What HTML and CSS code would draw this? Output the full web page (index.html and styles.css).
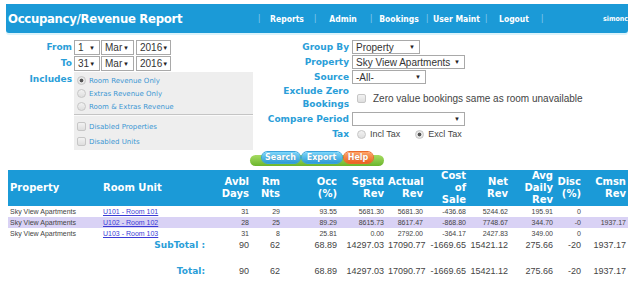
FILE: index.html
```html
<!DOCTYPE html>
<html lang="en">
<head>
  <meta charset="UTF-8" />
  <title>Occupancy/Revenue Report</title>
  <link rel="stylesheet" href="styles.css">
</head>
<body>

  <!-- TOP BAR -->
  <div class="topbar">
    <h1 class="title">Occupancy/Revenue Report</h1>
    <nav class="nav">
      <span class="sep">|</span><a href="#">Reports</a>
      <span class="sep">|</span><a href="#">Admin</a>
      <span class="sep">|</span><a href="#">Bookings</a>
      <span class="sep">|</span><a href="#" class="wide">User Maint</a>
      <span class="sep">|</span><a href="#">Logout</a>
      <span class="sep">|</span>
    </nav>
    <span class="user">simonc</span>
  </div>

  <!-- FILTERS -->
  <form class="filters">
    <div class="filters-left">
      <label class="lbl">From</label>
      <div class="ctrl">
        <span class="sel day">1</span><span class="sel month">Mar</span><span class="sel year">2016</span>
      </div>
      <label class="lbl">To</label>
      <div class="ctrl">
        <span class="sel day">31</span><span class="sel month">Mar</span><span class="sel year">2016</span>
      </div>
      <label class="lbl incl">Includes</label>
      <div class="incl-box">
        <div class="opt"><span class="radio on"></span>Room Revenue Only</div>
        <div class="opt"><span class="radio"></span>Extras Revenue Only</div>
        <div class="opt"><span class="radio"></span>Room &amp; Extras Revenue</div>
        <hr class="divider">
        <div class="opt chk"><span class="check"></span>Disabled Properties</div>
        <div class="opt chk"><span class="check"></span>Disabled Units</div>
      </div>
    </div>

    <div class="filters-right">
      <label class="lbl">Group By</label>
      <div class="ctrl"><span class="sel group">Property</span></div>
      <label class="lbl">Property</label>
      <div class="ctrl"><span class="sel wide">Sky View Apartments</span></div>
      <label class="lbl">Source</label>
      <div class="ctrl"><span class="sel source">-All-</span></div>
      <label class="lbl two">Exclude Zero<br>Bookings</label>
      <div class="ctrl"><span class="check"></span><span class="note">Zero value bookings same as room unavailable</span></div>
      <label class="lbl">Compare Period</label>
      <div class="ctrl"><span class="sel wide"></span></div>
      <label class="lbl">Tax</label>
      <div class="ctrl">
        <span class="radio"></span><span class="tax">Incl Tax</span>
        <span class="radio on"></span><span class="tax">Excl Tax</span>
      </div>
    </div>
  </form>

  <!-- BUTTONS -->
  <div class="actions">
    <div class="tray">
      <a href="#" class="btn blue search">Search</a>
      <a href="#" class="btn blue export">Export</a>
      <a href="#" class="btn orange help">Help</a>
    </div>
  </div>

  <!-- REPORT -->
  <table class="report">
    <colgroup>
      <col style="width:92px"><col style="width:108px"><col style="width:43px"><col style="width:31px">
      <col style="width:57px"><col style="width:47px"><col style="width:39px"><col style="width:43px">
      <col style="width:42px"><col style="width:45px"><col style="width:28px"><col style="width:45px">
    </colgroup>
    <thead>
      <tr>
        <th class="l">Property</th>
        <th class="l unit">Room Unit</th>
        <th>Avbl<br>Days</th>
        <th>Rm<br>Nts</th>
        <th>Occ<br>(%)</th>
        <th>Sgstd<br>Rev</th>
        <th>Actual<br>Rev</th>
        <th>Cost<br>of<br>Sale</th>
        <th>Net<br>Rev</th>
        <th>Avg<br>Daily<br>Rev</th>
        <th>Disc<br>(%)</th>
        <th>Cmsn<br>Rev</th>
      </tr>
    </thead>
    <tbody>
      <tr>
        <td class="l">Sky View Apartments</td><td class="l unit"><a href="#">U101 - Room 101</a></td>
        <td>31</td><td>29</td><td>93.55</td><td>5681.30</td><td>5681.30</td><td>-436.68</td><td>5244.62</td><td>195.91</td><td>0</td><td></td>
      </tr>
      <tr class="alt">
        <td class="l">Sky View Apartments</td><td class="l unit"><a href="#">U102 - Room 102</a></td>
        <td>28</td><td>25</td><td>89.29</td><td>8615.73</td><td>8617.47</td><td>-868.80</td><td>7748.67</td><td>344.70</td><td>-0</td><td>1937.17</td>
      </tr>
      <tr>
        <td class="l">Sky View Apartments</td><td class="l unit"><a href="#">U103 - Room 103</a></td>
        <td>31</td><td>8</td><td>25.81</td><td>0.00</td><td>2792.00</td><td>-364.17</td><td>2427.83</td><td>349.00</td><td>0</td><td></td>
      </tr>
      <tr class="tot">
        <td colspan="2" class="tot-lbl">SubTotal :</td>
        <td>90</td><td>62</td><td>68.89</td><td>14297.03</td><td>17090.77</td><td>-1669.65</td><td>15421.12</td><td>275.66</td><td>-20</td><td>1937.17</td>
      </tr>
      <tr class="spacer"><td colspan="12"></td></tr>
      <tr class="tot">
        <td colspan="2" class="tot-lbl">Total:</td>
        <td>90</td><td>62</td><td>68.89</td><td>14297.03</td><td>17090.77</td><td>-1669.65</td><td>15421.12</td><td>275.66</td><td>-20</td><td>1937.17</td>
      </tr>
    </tbody>
  </table>

</body>
</html>
```

FILE: styles.css
```css
body {
  margin: 0;
  font-family: "DejaVu Sans", Verdana, sans-serif;
  background-color: #fff;
}

/* Top bar */
.topbar {
  display: flex;
  align-items: center;
  height: 29px;
  margin: 4px 5px 0 6px;
  background-color: #1b9ad7;
  color: #fff;
  border-radius: 0 0 3px 3px;
  box-shadow: 0 2px 0 #dbf3fb;
  overflow: hidden;
}

.title {
  margin: 0 0 0 2px;
  width: 250px;
  font: bold 13px "DejaVu Sans Condensed", sans-serif;
  letter-spacing: -0.3px;
}

.nav {
  display: flex;
  align-items: center;
  font: bold 8.5px "DejaVu Sans Condensed", sans-serif;
}

.nav .sep {
  width: 2px;
  color: #8fd0f0;
  font-weight: normal;
  font-size: 8px;
}

.nav a {
  width: 54px;
  text-align: center;
  color: #fff;
  text-decoration: none;
}

.nav a.wide {
  width: 57px;
}

.user {
  margin-left: auto;
  font: bold 7px "DejaVu Sans Condensed", sans-serif;
}

/* Filters */
.filters {
  display: flex;
  margin: 7px 0 0 8px;
}

.filters-left {
  display: grid;
  grid-template-columns: 64px 179px;
  grid-auto-rows: 15px;
  column-gap: 2px;
  row-gap: 1px;
}

.filters-right {
  display: grid;
  grid-template-columns: 96px auto;
  grid-template-rows: 14px 14px 14px 26px 14px 14px;
  column-gap: 3px;
  row-gap: 1px;
}

.lbl {
  text-align: right;
  color: #2a9ed8;
  font: bold 9px/15px "DejaVu Sans", sans-serif;
  white-space: nowrap;
}

.filters-right .lbl {
  line-height: 14px;
}

.filters-right .lbl.two {
  line-height: 13px;
}

.lbl.incl {
  line-height: 14px;
}

.ctrl {
  display: flex;
  align-items: center;
  gap: 1px;
}

.sel {
  display: inline-flex;
  align-items: center;
  box-sizing: border-box;
  height: 15px;
  padding: 0 4px 0 3px;
  border: 1px solid #a9a9a9;
  background-color: #fff;
  color: #333;
  font: 10px "Liberation Sans", Arial, sans-serif;
}

.sel::after {
  content: "\25BC";
  margin-left: auto;
  font-size: 6px;
  color: #222;
}

.sel.day { width: 26px; }
.sel.month { width: 33px; }
.sel.year { width: 35px; margin-left: 1px; }
.filters-right .sel { height: 14px; }
.sel.group { width: 68px; }
.sel.wide { width: 113px; }
.sel.source { width: 74px; }

/* Includes box */
.incl-box {
  height: 76px;
  padding-top: 2px;
  background-color: #eeeeee;
}

.opt {
  display: flex;
  align-items: center;
  height: 13px;
  padding-left: 3px;
  color: #3d97d3;
  font-size: 7px;
}

.opt.chk {
  height: 15px;
}

.divider {
  margin: 1px 0 3px;
  border: 0;
  border-top: 1px solid #c4c4c4;
  border-bottom: 1px solid #fafafa;
}

.radio,
.check {
  display: inline-block;
  box-sizing: border-box;
  width: 9px;
  height: 9px;
  margin-right: 3px;
  border: 1px solid #c6c6c6;
  background: linear-gradient(#f2f2f2, #dedede);
  flex-shrink: 0;
}

.radio {
  border-radius: 50%;
}

.radio.on {
  background: radial-gradient(circle, #555 0 1.6px, #e6e6e6 2.2px);
}

.check {
  border-radius: 2px;
}

.filters-right .ctrl .check {
  margin: 0 6px 0 5px;
}

.note {
  color: #444;
  font: 10px "Liberation Sans", Arial, sans-serif;
}

.filters-right .radio {
  margin: 0 3px 0 5px;
}

.tax {
  margin-right: 9px;
  color: #444;
  font: 9px "Liberation Sans", Arial, sans-serif;
}

/* Buttons */
.actions {
  display: flex;
  justify-content: center;
  margin-top: 14px;
}

.tray {
  display: flex;
  gap: 2px;
  width: 134px;
  height: 11px;
  box-sizing: border-box;
  padding-left: 12px;
  border-radius: 6px;
  background: linear-gradient(#a6dc62, #6bb52c);
}

.btn {
  box-sizing: border-box;
  height: 11px;
  margin-top: -3px;
  border-radius: 6px;
  color: #fff;
  font: bold 8px/11px "DejaVu Sans", sans-serif;
  text-align: center;
  text-decoration: none;
  text-shadow: 0 0 1px rgba(0,0,0,0.25);
}

.btn.blue {
  background: linear-gradient(#7dd6fa, #2d9bd8);
  box-shadow: 0 0 0 1px #3aa3dc;
}

.btn.orange {
  background: linear-gradient(#ffa56a, #ec6220);
  box-shadow: 0 0 0 1px #ea6b2c;
}

.btn.search { width: 38px; }
.btn.export { width: 40px; }
.btn.help { width: 29px; }

/* Report table */
.report {
  width: 620px;
  margin: 4px 0 0 8px;
  border-collapse: collapse;
  table-layout: fixed;
}

.report th {
  height: 36px;
  padding: 0 2px;
  background-color: #1b9ad7;
  color: #fff;
  font: bold 10px/12px "DejaVu Sans", sans-serif;
  text-align: right;
  vertical-align: middle;
}

.report td {
  height: 11px;
  padding: 0 2px;
  color: #444;
  font: 7px/11px "Liberation Sans", Arial, sans-serif;
  text-align: right;
  white-space: nowrap;
}

.report .l {
  text-align: left;
}

.report .unit {
  padding-left: 3px;
}

.report td a {
  color: #3b3bd6;
}

.report tr.alt td {
  background-color: #d9d2f5;
}

.report tr.tot td {
  height: 12px;
  font-size: 9px;
  line-height: 12px;
  color: #444;
}

.report tr.tot td.tot-lbl {
  padding-right: 3px;
  color: #2a9ed8;
  font: bold 9px/12px "DejaVu Sans", sans-serif;
}

.report tr.spacer td {
  height: 14px;
}
```
